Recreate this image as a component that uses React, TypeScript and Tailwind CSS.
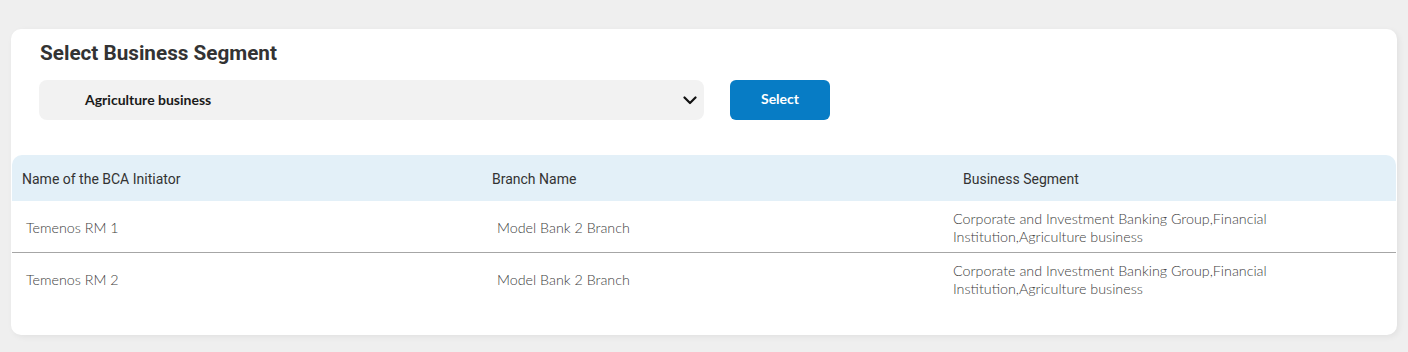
import React from "react";

const rows = [
  { name: "Temenos RM 1", branch: "Model Bank 2 Branch", seg: "Corporate and Investment Banking Group,Financial Institution,Agriculture business" },
  { name: "Temenos RM 2", branch: "Model Bank 2 Branch", seg: "Corporate and Investment Banking Group,Financial Institution,Agriculture business" },
];

export default function App() {
  return (
    <div className="h-[352px] w-[1408px] bg-[#efefef] pt-[29px] pl-[11px] pr-[11px]">
      <div className="h-[306px] rounded-[10px] bg-white shadow-[2px_2px_6px_rgba(0,0,0,0.06)]">
        <div
          className="pl-[29px] pt-[10px] text-[20.7px] leading-[28px] font-bold text-[#333333]"
          style={{ fontFamily: "Roboto, 'Liberation Sans', sans-serif" }}
        >
          Select Business Segment
        </div>
        <div className="mt-[13px] flex items-center pl-[28px]">
          <div className="flex h-[40px] w-[665px] items-center justify-between rounded-[8px] bg-[#f2f2f2] pl-[46px] pr-[7px]">
            <span
              className="-mt-[2px] text-[14px] font-bold text-[#1a1a1a]"
              style={{ fontFamily: "Lato, 'Open Sans', sans-serif" }}
            >
              Agriculture business
            </span>
            <svg width="14" height="9" viewBox="0 0 14 9" fill="none">
              <path d="M1.5 1.5L7 7l5.5-5.5" stroke="#111" strokeWidth="2.2" strokeLinecap="round" strokeLinejoin="round" />
            </svg>
          </div>
          <button
            className="ml-[26px] flex h-[40px] w-[100px] items-center justify-center rounded-[6px] bg-[#077cc5] pb-[3px] text-[14px] font-bold text-white"
            style={{ fontFamily: "Lato, 'Open Sans', sans-serif" }}
          >
            Select
          </button>
        </div>
        <div className="mt-[35px] px-[1px]">
          <div
            className="grid h-[46px] grid-cols-[470px_470px_1fr] items-center rounded-t-[10px] bg-[#e3f0f8] pt-[2px] text-[14px] text-[#333333]"
            style={{ fontFamily: "Roboto, 'Liberation Sans', sans-serif" }}
          >
            <div className="pl-[10px]">Name of the BCA Initiator</div>
            <div className="pl-[10px]">Branch Name</div>
            <div className="pl-[11px]">Business Segment</div>
          </div>
          {rows.map((r, i) => (
            <div
              key={i}
              className={
                "grid grid-cols-[470px_470px_1fr] items-center pt-[2px] text-[14.3px] leading-[18px] font-light text-[#404040] " +
                (i === 0 ? "h-[52px] border-b border-[#a6a6a6]" : "h-[51px]")
              }
              style={{ fontFamily: "Lato, 'Open Sans', sans-serif" }}
            >
              <div className="pl-[14px]">{r.name}</div>
              <div className="pl-[15px]">{r.branch}</div>
              <div className="pl-[1px]">
                <div className="max-w-[350px]">{r.seg}</div>
              </div>
            </div>
          ))}
        </div>
      </div>
    </div>
  );
}
